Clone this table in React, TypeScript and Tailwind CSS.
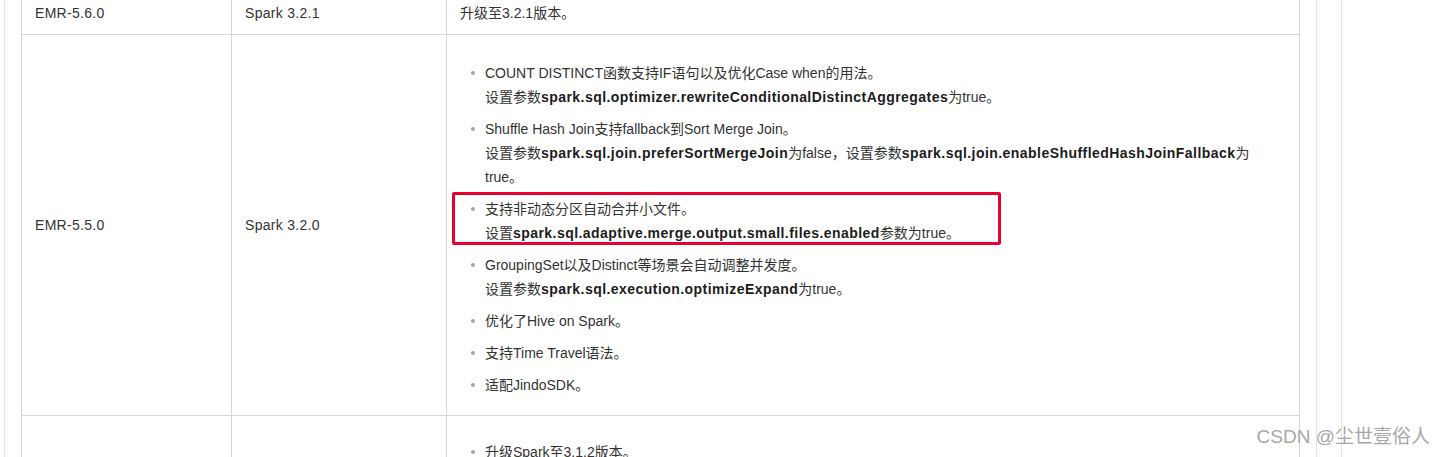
import React from "react";

// 一条带圆点的列表项
function Item({ lines, boxed }: { lines: React.ReactNode[]; boxed?: boolean }) {
  return (
    <li className="relative flex">
      <span className="w-[25px] shrink-0">
        <span className="ml-[11px] mt-[10px] block h-[4px] w-[4px] rounded-full bg-[#a3a3a3]" />
      </span>
      <div>
        {lines.map((l, i) => (
          <div key={i} className="whitespace-nowrap">
            {l}
          </div>
        ))}
      </div>
      {boxed && (
        <div className="pointer-events-none absolute left-[-8px] top-[-5px] h-[53px] w-[549px] rounded-[2px] border-[3px] border-[#e8002f]" />
      )}
    </li>
  );
}

const B = ({ children }: { children: React.ReactNode }) => (
  <b className="font-bold tracking-[0.45px] text-[#1c1c1c]">{children}</b>
);

export default function App() {
  return (
    <div
      className="relative flex h-[457px] w-[1446px] overflow-hidden bg-white text-[14px] leading-[24px] text-[#333]"
      style={{ fontFamily: '"Liberation Sans", "Noto Sans CJK SC", sans-serif' }}
    >
      <div className="w-[4px] shrink-0" />
      <div className="w-px shrink-0 bg-[#e3e3e3]" />
      <div className="w-[16px] shrink-0" />

      {/* 表格 */}
      <div className="w-[1279px] shrink-0 border-l border-[#d6d6d6]">
        {/* EMR-5.6.0 */}
        <div className="flex h-[35px] border-b border-[#d6d6d6]">
          <div className="w-[210px] shrink-0 border-r border-[#d6d6d6] pl-[13px] pt-[1px] tracking-[0.3px]">EMR-5.6.0</div>
          <div className="w-[215px] shrink-0 border-r border-[#d6d6d6] pl-[13px] pt-[1px] tracking-[0.3px]">Spark 3.2.1</div>
          <div className="w-[853px] shrink-0 border-r border-[#d6d6d6] pl-[13px] pt-[1px]">升级至3.2.1版本。</div>
        </div>

        {/* EMR-5.5.0 */}
        <div className="flex h-[381px] border-b border-[#d6d6d6]">
          <div className="flex w-[210px] shrink-0 items-center border-r border-[#d6d6d6] pl-[13px] tracking-[0.3px]">EMR-5.5.0</div>
          <div className="flex w-[215px] shrink-0 items-center border-r border-[#d6d6d6] pl-[13px] tracking-[0.3px]">Spark 3.2.0</div>
          <div className="w-[853px] shrink-0 border-r border-[#d6d6d6] pl-[13px] pt-[26px]">
            <ul className="flex flex-col gap-[8px]">
              <Item
                lines={[
                  "COUNT DISTINCT函数支持IF语句以及优化Case when的用法。",
                  <>设置参数<B>spark.sql.optimizer.rewriteConditionalDistinctAggregates</B>为true。</>,
                ]}
              />
              <Item
                lines={[
                  "Shuffle Hash Join支持fallback到Sort Merge Join。",
                  <>
                    设置参数<B>spark.sql.join.preferSortMergeJoin</B>为false，设置参数
                    <B>spark.sql.join.enableShuffledHashJoinFallback</B>为
                  </>,
                  "true。",
                ]}
              />
              <Item
                boxed
                lines={[
                  "支持非动态分区自动合并小文件。",
                  <>设置<B>spark.sql.adaptive.merge.output.small.files.enabled</B>参数为true。</>,
                ]}
              />
              <Item
                lines={[
                  "GroupingSet以及Distinct等场景会自动调整并发度。",
                  <>设置参数<B>spark.sql.execution.optimizeExpand</B>为true。</>,
                ]}
              />
              <Item lines={["优化了Hive on Spark。"]} />
              <Item lines={["支持Time Travel语法。"]} />
              <Item lines={["适配JindoSDK。"]} />
            </ul>
          </div>
        </div>

        {/* 下一行 */}
        <div className="flex h-[120px]">
          <div className="w-[210px] shrink-0 border-r border-[#d6d6d6]" />
          <div className="w-[215px] shrink-0 border-r border-[#d6d6d6]" />
          <div className="w-[853px] shrink-0 border-r border-[#d6d6d6] pl-[13px] pt-[24px]">
            <ul>
              <Item lines={["升级Spark至3.1.2版本。"]} />
            </ul>
          </div>
        </div>
      </div>

      <div className="w-[16px] shrink-0" />
      <div className="w-px shrink-0 bg-[#e3e3e3]" />
      <div className="w-[24px] shrink-0" />
      <div className="w-px shrink-0 bg-[#e3e3e3]" />

      {/* 水印 */}
      <div className="absolute right-[16px] top-[424px] text-[19px] leading-[26px] text-[#a8a8a8] [text-shadow:0_0_1px_#fff]">
        CSDN @尘世壹俗人
      </div>
    </div>
  );
}
